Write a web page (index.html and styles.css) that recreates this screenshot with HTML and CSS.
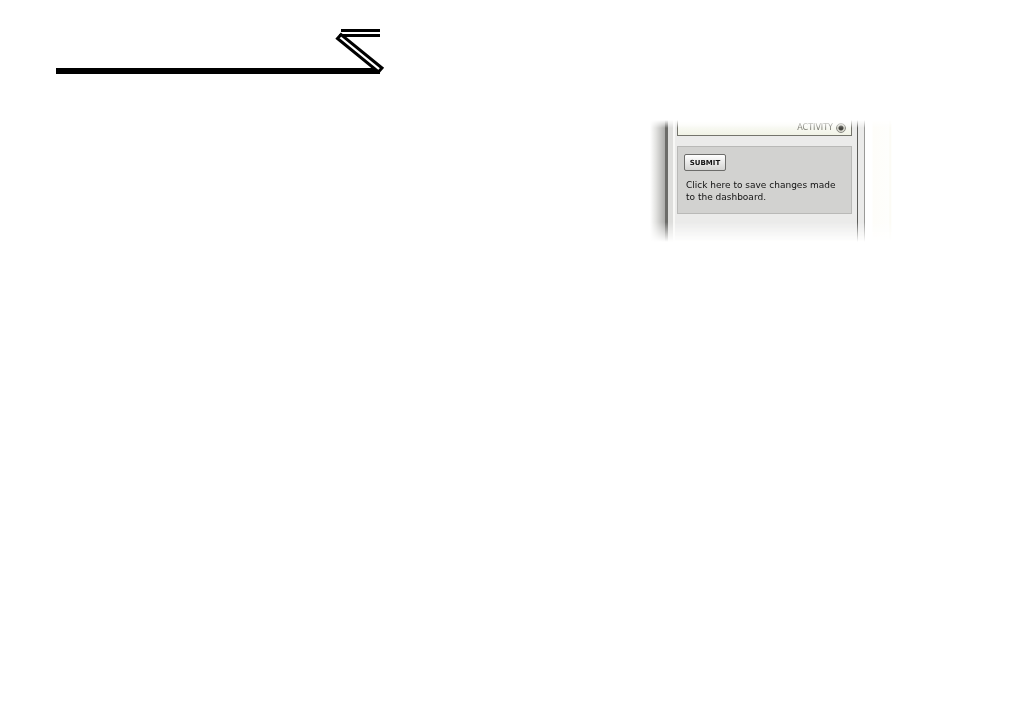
FILE: index.html
```html
<!DOCTYPE html>
<html lang="en">
<head>
  <meta charset="UTF-8">
  <meta name="viewport" content="width=device-width, initial-scale=1.0">
  <title>Dashboard</title>
  <link rel="stylesheet" href="styles.css">
</head>
<body>

  <div class="page">
    <!-- Header rule -->
    <header>
      <svg class="rule" width="330" height="48" viewBox="0 0 330 48" aria-hidden="true">
        <path d="M285 2.5H324M283 7.5H324" stroke="#000" stroke-width="3"/>
        <path d="M0 43H324" stroke="#000" stroke-width="6"/>
        <path d="M281.500 10.500L285 6.500L326 40L322.500 44Z" fill="#fff" stroke="#000" stroke-width="3"/>
      </svg>
    </header>

    <!-- Dashboard panel -->
    <main class="window">
      <div class="shadow"></div>
      <div class="frame"></div>
      <div class="content">
        <div class="activity">
          <label for="activity">ACTIVITY</label>
          <input type="radio" id="activity" checked>
        </div>
        <form class="save">
          <button type="button">SUBMIT</button>
          <p>Click here to save changes made to the dashboard.</p>
        </form>
      </div>
      <div class="edge"></div>
      <div class="margin"></div>
    </main>
  </div>

</body>
</html>
```

FILE: styles.css
```css
body {
  font-family: "DejaVu Sans", Verdana, sans-serif;
  background-color: #fff;
  color: #111;
  margin: 0;
}

.page {
  display: flex;
  justify-content: space-between;
  align-items: flex-start;
  padding: 28px 130px 28px 56px;
}

.rule {
  display: block;
}

.window {
  display: flex;
  margin-top: 92px;
  -webkit-mask-image: linear-gradient(transparent, #000 8px, #000 calc(100% - 20px), transparent);
  mask-image: linear-gradient(transparent, #000 8px, #000 calc(100% - 20px), transparent);
}

.shadow {
  width: 15px;
  background: linear-gradient(to right, #fff, #e2e2e0 40%, #acacaa);
}

.frame {
  width: 5px;
  background-color: #dededc;
  border-left: 3px solid #6c6c69;
  border-right: 2px solid #f8f8f6;
}

.content {
  box-sizing: border-box;
  width: 182px;
  padding: 0 5px 28px 2px;
  background-color: #ebebea;
}

.activity {
  display: flex;
  align-items: center;
  justify-content: flex-end;
  gap: 3px;
  height: 15px;
  padding-right: 5px;
  border: 1px solid #74746c;
  border-top: none;
  background: linear-gradient(#fff, #f1f3e6);
}

.activity label {
  font-size: 8px;
  line-height: 10px;
  color: #77776f;
}

.activity input {
  appearance: none;
  box-sizing: border-box;
  width: 10px;
  height: 10px;
  margin: 0;
  border: 1px solid #8a8a83;
  border-radius: 50%;
  background: radial-gradient(circle, #44443e 2px, #d8d8cf 3px);
}

.save {
  box-sizing: border-box;
  height: 68px;
  margin-top: 10px;
  padding: 7px 6px;
  border: 1px solid #b9b9b7;
  background-color: #d2d2d0;
}

.save button {
  display: block;
  width: 42px;
  height: 17px;
  padding: 0;
  border: 1px solid #6c6c6a;
  border-radius: 2px;
  background: linear-gradient(#fff, #d4d4d2);
  font-family: inherit;
  font-size: 7px;
  font-weight: bold;
  color: #111;
}

.save p {
  margin: 8px 0 0 2px;
  font-size: 9px;
  line-height: 12px;
}

.edge {
  width: 6px;
  background-color: #ebebea;
  border-left: 1px solid #5c5c59;
  border-right: 1px solid #9a9a98;
}

.margin {
  width: 27px;
  background: linear-gradient(to right, #fff 7px, #fefdf9 8px, #fefefc 24px, #fbfaf2 25px, #fff);
}
```
